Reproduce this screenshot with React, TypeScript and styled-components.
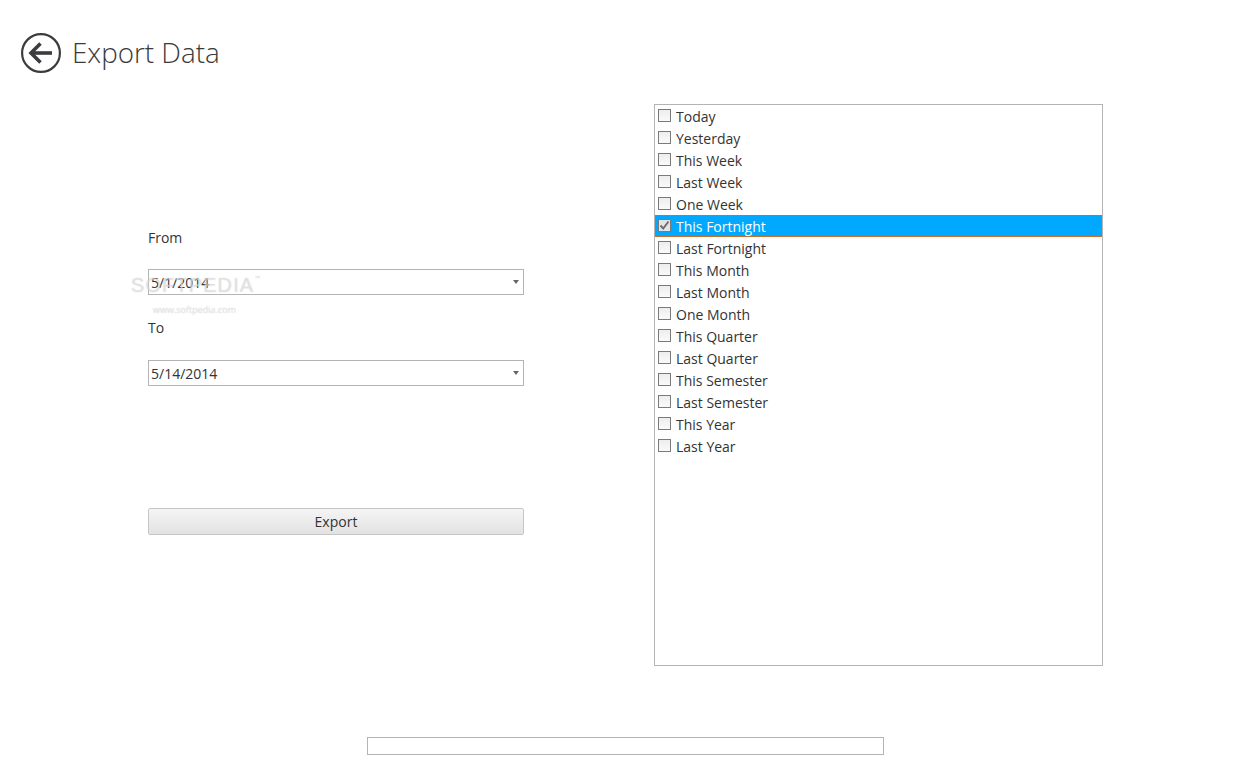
import React from "react";
import styled, { createGlobalStyle } from "styled-components";

const Global = createGlobalStyle`
  html, body { margin: 0; padding: 0; background: #fff; }
  body { font-family: "Open Sans", "Noto Sans", "Liberation Sans", sans-serif; color: #333; }
`;

const Page = styled.div`
  position: relative;
  width: 1251px;
  height: 782px;
  overflow: hidden;
  display: flex;
  flex-direction: column;
  background: #fff;
`;

const Header = styled.header`
  display: flex;
  align-items: center;
  gap: 12px;
  height: 40px;
  padding: 33px 0 0 21px;
`;

const Title = styled.h1`
  margin: 0 0 1px -1px;
  font-size: 27.8px;
  font-weight: 300;
  line-height: 39px;
  color: #3a3a3a;
`;

const Content = styled.main`
  display: flex;
  align-items: flex-start;
  height: 562px;
  padding: 31px 0 0 148px;
`;

const FormColumn = styled.section`
  display: flex;
  flex-direction: column;
  width: 376px;
  padding-top: 124px;
`;

const FieldLabel = styled.label<{ $gap: number }>`
  display: block;
  height: 20px;
  margin-bottom: ${(p) => p.$gap}px;
  font-size: 14px;
  line-height: 20px;
  color: #333;
`;

const DateBox = styled.div<{ $after: number }>`
  display: flex;
  align-items: center;
  justify-content: space-between;
  box-sizing: border-box;
  height: 26px;
  margin-bottom: ${(p) => p.$after}px;
  padding: 0 4px 0 2px;
  border: 1px solid #b4b4b4;
  font-size: 14px;
  color: #333;
`;

const Arrow = styled.span`
  width: 0;
  height: 0;
  border-left: 3.5px solid transparent;
  border-right: 3.5px solid transparent;
  border-top: 4px solid #666;
`;

const ExportButton = styled.button`
  box-sizing: border-box;
  height: 27px;
  padding: 0;
  border: 1px solid #c6c6c6;
  border-radius: 2px;
  background: linear-gradient(#f5f5f5, #e2e2e2);
  font-family: inherit;
  font-size: 14px;
  color: #333;
`;

const ListBox = styled.ul`
  box-sizing: border-box;
  width: 449px;
  height: 562px;
  margin: 0 0 0 130px;
  padding: 0;
  list-style: none;
  border: 1px solid #b4b4b4;
`;

const Row = styled.li<{ $selected?: boolean }>`
  position: relative;
  display: flex;
  align-items: center;
  gap: 5px;
  box-sizing: border-box;
  height: 22px;
  padding-left: 3px;
  font-size: 14px;
  line-height: 20px;
  color: ${(p) => (p.$selected ? "#fff" : "#333")};
  background: ${(p) => (p.$selected ? "#00a9ff" : "transparent")};
`;

const RowLabel = styled.span`
  padding-top: 2px;
`;

const FocusRing = styled.span`
  position: absolute;
  inset: 0;
  pointer-events: none;
  background:
    repeating-linear-gradient(90deg, #e8641b 0 1px, transparent 1px 2px) left top / 100% 1px no-repeat,
    repeating-linear-gradient(90deg, #e8641b 0 1px, #c9702f 1px 2px) left bottom / 100% 1px no-repeat,
    repeating-linear-gradient(0deg, #e8641b 0 1px, transparent 1px 2px) left top / 1px 100% no-repeat,
    repeating-linear-gradient(0deg, #e8641b 0 1px, transparent 1px 2px) right top / 1px 100% no-repeat;
`;

const Check = styled.span<{ $checked?: boolean }>`
  display: flex;
  align-items: center;
  justify-content: center;
  box-sizing: border-box;
  width: 13px;
  height: 13px;
  margin-bottom: 2px;
  flex: none;
  border: 1px solid #7a7a7a;
  background: ${(p) => (p.$checked ? "#e4e4e4" : "linear-gradient(#ededed, #fafafa)")};
`;

const Footer = styled.footer`
  display: flex;
  justify-content: center;
  padding-top: 71px;
`;

const ProgressBar = styled.div`
  box-sizing: border-box;
  width: 517px;
  height: 18px;
  border: 1px solid #b4b4b4;
`;

const Watermark = styled.div`
  position: absolute;
  left: 131px;
  top: 273px;
  pointer-events: none;
  color: rgba(255, 255, 255, 0.45);
  text-shadow: 0 0 1px rgba(150, 150, 150, 0.55);
`;

const WatermarkName = styled.div`
  font-family: "Liberation Sans", sans-serif;
  font-size: 20px;
  line-height: 24px;
  letter-spacing: 1.1px;
  white-space: nowrap;
`;

const WatermarkUrl = styled.div`
  margin: 7px 0 0 22px;
  font-size: 9px;
  line-height: 12px;
  white-space: nowrap;
`;

const Tm = styled.sup`
  font-size: 6px;
  vertical-align: 12px;
  line-height: 0;
`;

const periods = [
  "Today", "Yesterday", "This Week", "Last Week", "One Week", "This Fortnight",
  "Last Fortnight", "This Month", "Last Month", "One Month", "This Quarter",
  "Last Quarter", "This Semester", "Last Semester", "This Year", "Last Year",
];

export default function App() {
  return (
    <Page>
      <Global />
      <Header>
        <svg width="40" height="40" viewBox="0 0 40 40" fill="none" aria-hidden="true">
          <circle cx="20" cy="20" r="18.9" stroke="#3c3c3e" strokeWidth="2.2" />
          <path d="M11 20H31" stroke="#3c3c3e" strokeWidth="3.6" />
          <path d="M19.5 10.5L10 20L19.5 29.5" stroke="#3c3c3e" strokeWidth="3.6" />
        </svg>
        <Title>Export Data</Title>
      </Header>
      <Content>
        <FormColumn>
          <FieldLabel $gap={21}>From</FieldLabel>
          <DateBox $after={23}>
            <span>5/1/2014</span>
            <Arrow />
          </DateBox>
          <FieldLabel $gap={22}>To</FieldLabel>
          <DateBox $after={122}>
            <span>5/14/2014</span>
            <Arrow />
          </DateBox>
          <ExportButton>Export</ExportButton>
        </FormColumn>
        <ListBox>
          {periods.map((name) => {
            const selected = name === "This Fortnight";
            return (
              <Row key={name} $selected={selected}>
                <Check $checked={selected}>
                  {selected && (
                    <svg width="11" height="11" viewBox="0 0 11 11" fill="none" aria-hidden="true">
                      <path d="M1.5 5.5L4.2 8.5L9.5 1.5" stroke="#6e6e6e" strokeWidth="2" />
                    </svg>
                  )}
                </Check>
                <RowLabel>{name}</RowLabel>
                {selected && <FocusRing />}
              </Row>
            );
          })}
        </ListBox>
      </Content>
      <Footer>
        <ProgressBar />
      </Footer>
      <Watermark>
        <WatermarkName>SOFTPEDIA<Tm>™</Tm></WatermarkName>
        <WatermarkUrl>www.softpedia.com</WatermarkUrl>
      </Watermark>
    </Page>
  );
}
